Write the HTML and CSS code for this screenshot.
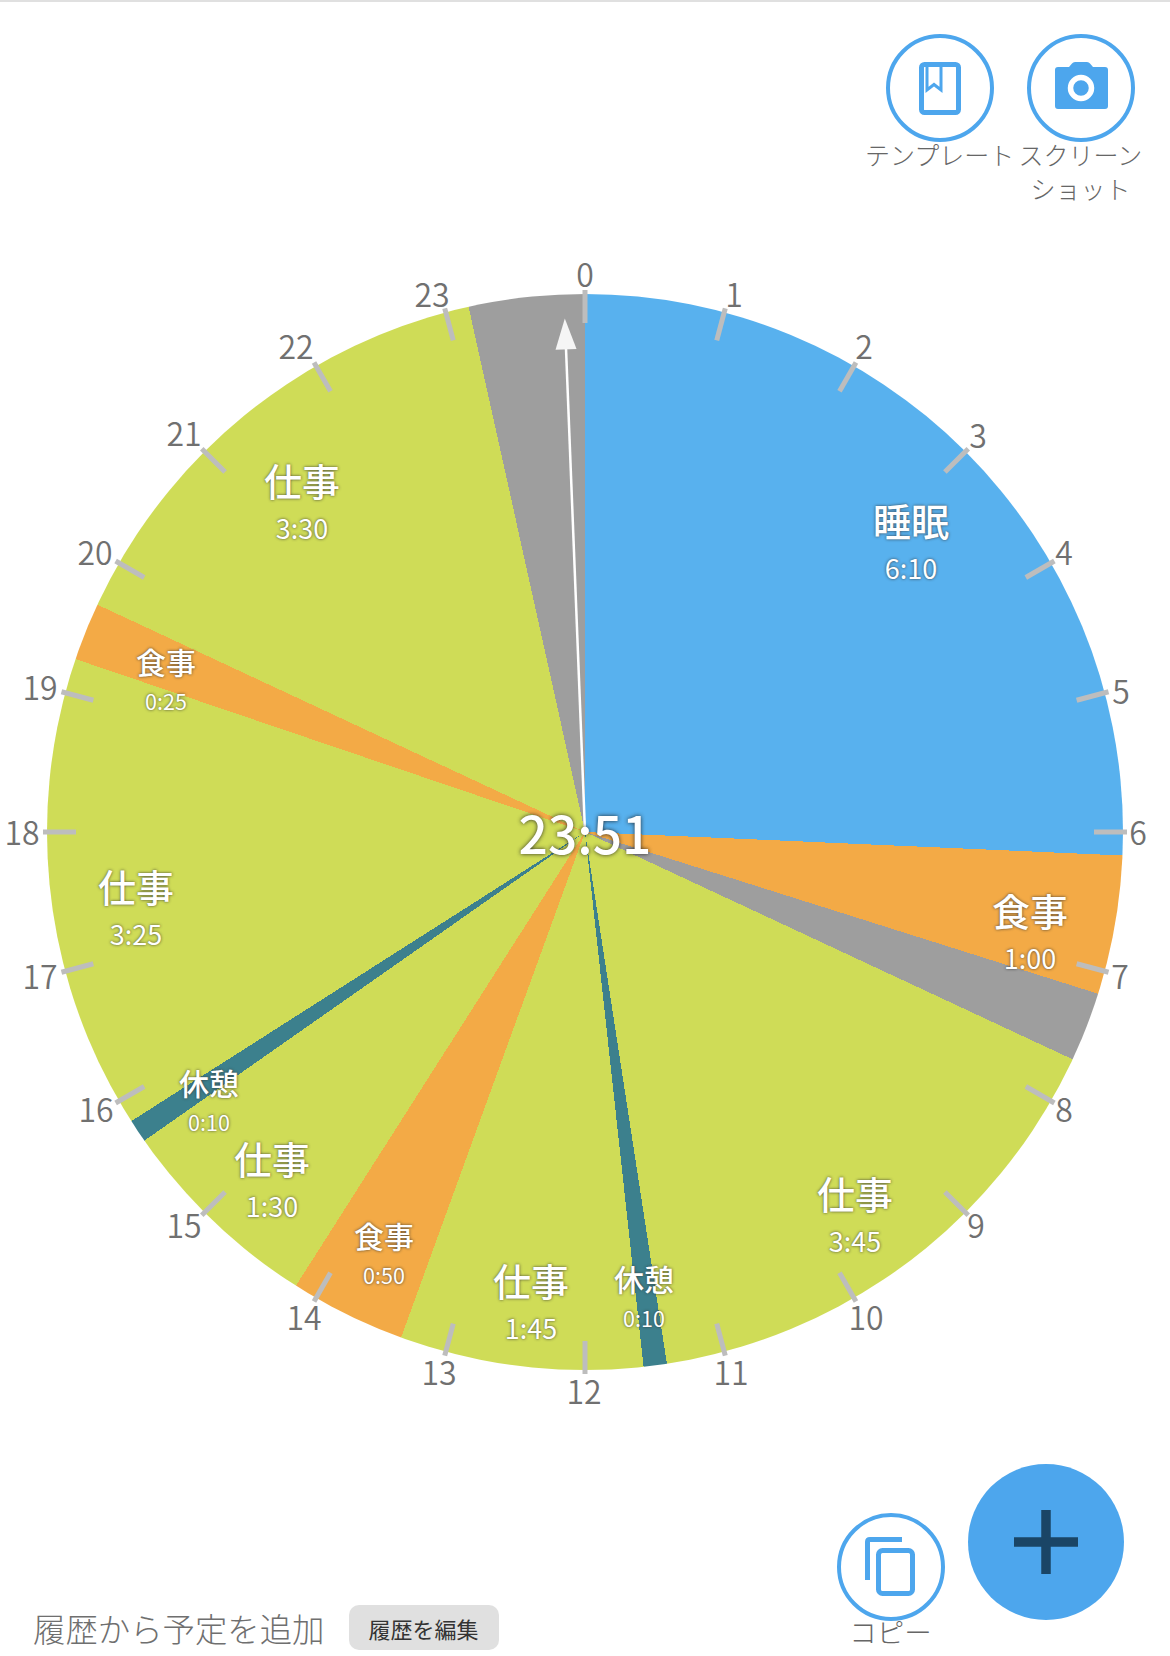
FILE: index.html
```html
<!DOCTYPE html>
<html lang="ja">
<head>
<meta charset="utf-8">
<title>円グラフ</title>
<link rel="stylesheet" href="styles.css">
</head>
<body>
<div class="app">
  <header class="tools">
    <div class="tool">
      <div class="ring">
        <svg class="icon" viewBox="0 0 108 108">
          <rect class="line-thick" x="35.500" y="30.500" width="37" height="48" rx="3"/>
          <path class="line-thin" d="M41 31V56L48 50.500L55 56V31"/>
        </svg>
      </div>
      <span class="tool-label">テンプレート</span>
    </div>
    <div class="tool">
      <div class="ring">
        <svg class="icon" viewBox="0 0 108 108">
          <path class="fill" d="M31 33H42L45 29.500Q46 28 48 28H60Q62 28 63 29.500L66 33H78Q81 33 81 36V72Q81 75 78 75H31Q28 75 28 72V36Q28 33 31 33Z"/>
          <circle class="lens" cx="54" cy="54" r="10.500"/>
        </svg>
      </div>
      <span class="tool-label">スクリーンショット</span>
    </div>
  </header>

  <main class="stage">
    <div class="pie">
      <svg class="overlay" viewBox="0 0 1076 1076">
        <g class="ticks">
          <line x1="538" y1="-4" x2="538" y2="29"/>
          <line x1="538" y1="-4" x2="538" y2="29" transform="rotate(15 538 538)"/>
          <line x1="538" y1="-4" x2="538" y2="29" transform="rotate(30 538 538)"/>
          <line x1="538" y1="-4" x2="538" y2="29" transform="rotate(45 538 538)"/>
          <line x1="538" y1="-4" x2="538" y2="29" transform="rotate(60 538 538)"/>
          <line x1="538" y1="-4" x2="538" y2="29" transform="rotate(75 538 538)"/>
          <line x1="538" y1="-4" x2="538" y2="29" transform="rotate(90 538 538)"/>
          <line x1="538" y1="-4" x2="538" y2="29" transform="rotate(105 538 538)"/>
          <line x1="538" y1="-4" x2="538" y2="29" transform="rotate(120 538 538)"/>
          <line x1="538" y1="-4" x2="538" y2="29" transform="rotate(135 538 538)"/>
          <line x1="538" y1="-4" x2="538" y2="29" transform="rotate(150 538 538)"/>
          <line x1="538" y1="-4" x2="538" y2="29" transform="rotate(165 538 538)"/>
          <line x1="538" y1="-4" x2="538" y2="29" transform="rotate(180 538 538)"/>
          <line x1="538" y1="-4" x2="538" y2="29" transform="rotate(195 538 538)"/>
          <line x1="538" y1="-4" x2="538" y2="29" transform="rotate(210 538 538)"/>
          <line x1="538" y1="-4" x2="538" y2="29" transform="rotate(225 538 538)"/>
          <line x1="538" y1="-4" x2="538" y2="29" transform="rotate(240 538 538)"/>
          <line x1="538" y1="-4" x2="538" y2="29" transform="rotate(255 538 538)"/>
          <line x1="538" y1="-4" x2="538" y2="29" transform="rotate(270 538 538)"/>
          <line x1="538" y1="-4" x2="538" y2="29" transform="rotate(285 538 538)"/>
          <line x1="538" y1="-4" x2="538" y2="29" transform="rotate(300 538 538)"/>
          <line x1="538" y1="-4" x2="538" y2="29" transform="rotate(315 538 538)"/>
          <line x1="538" y1="-4" x2="538" y2="29" transform="rotate(330 538 538)"/>
          <line x1="538" y1="-4" x2="538" y2="29" transform="rotate(345 538 538)"/>
        </g>
        <g class="hand" transform="rotate(-2.25 538 538)">
          <line x1="538" y1="538" x2="538" y2="50"/>
          <polygon points="538,24 548.500,55 527.500,55"/>
        </g>
      </svg>
    </div>

    <span class="hour" style="left:585px;top:65px">0</span>
    <span class="hour" style="left:734px;top:85px">1</span>
    <span class="hour" style="left:864px;top:137px">2</span>
    <span class="hour" style="left:978px;top:226px">3</span>
    <span class="hour" style="left:1064px;top:343px">4</span>
    <span class="hour" style="left:1121px;top:482px">5</span>
    <span class="hour" style="left:1138px;top:623px">6</span>
    <span class="hour" style="left:1120px;top:767px">7</span>
    <span class="hour" style="left:1064px;top:900px">8</span>
    <span class="hour" style="left:976px;top:1016px">9</span>
    <span class="hour" style="left:866px;top:1108px">10</span>
    <span class="hour" style="left:731px;top:1163px">11</span>
    <span class="hour" style="left:584px;top:1182px">12</span>
    <span class="hour" style="left:439px;top:1163px">13</span>
    <span class="hour" style="left:304px;top:1108px">14</span>
    <span class="hour" style="left:184px;top:1016px">15</span>
    <span class="hour" style="left:96px;top:900px">16</span>
    <span class="hour" style="left:40px;top:767px">17</span>
    <span class="hour" style="left:22px;top:623px">18</span>
    <span class="hour" style="left:40px;top:478px">19</span>
    <span class="hour" style="left:95px;top:343px">20</span>
    <span class="hour" style="left:184px;top:224px">21</span>
    <span class="hour" style="left:296px;top:137px">22</span>
    <span class="hour" style="left:432px;top:85px">23</span>

    <div class="slice" style="left:911px;top:335px"><b>睡眠</b><i>6:10</i></div>
    <div class="slice" style="left:1030px;top:725px"><b>食事</b><i>1:00</i></div>
    <div class="slice" style="left:855px;top:1008px"><b>仕事</b><i>3:45</i></div>
    <div class="slice small" style="left:644px;top:1090px"><b>休憩</b><i>0:10</i></div>
    <div class="slice" style="left:531px;top:1095px"><b>仕事</b><i>1:45</i></div>
    <div class="slice small" style="left:384px;top:1047px"><b>食事</b><i>0:50</i></div>
    <div class="slice" style="left:272px;top:973px"><b>仕事</b><i>1:30</i></div>
    <div class="slice small" style="left:209px;top:894px"><b>休憩</b><i>0:10</i></div>
    <div class="slice" style="left:136px;top:701px"><b>仕事</b><i>3:25</i></div>
    <div class="slice small" style="left:166px;top:473px"><b>食事</b><i>0:25</i></div>
    <div class="slice" style="left:302px;top:295px"><b>仕事</b><i>3:30</i></div>

    <div class="now">23:51</div>
  </main>

  <footer class="bottom">
    <div class="history">
      <span class="history-title">履歴から予定を追加</span>
      <button class="history-edit">履歴を編集</button>
    </div>
    <div class="tool copy">
      <div class="ring">
        <svg class="icon" viewBox="0 0 108 108">
          <rect class="line-thick" x="41.500" y="37.500" width="34" height="43" rx="4"/>
          <path class="line-thick" d="M30.500 67V29Q30.500 26.500 33 26.500H65"/>
        </svg>
      </div>
      <span class="tool-label copy-label">コピー</span>
    </div>
    <button class="fab" aria-label="追加">
      <svg class="fab-icon" viewBox="0 0 156 156">
        <path d="M46 78H110M78 46V110"/>
      </svg>
    </button>
  </footer>
</div>
</body>
</html>
```
FILE: styles.css
```css
* { box-sizing: border-box; }
html, body { margin: 0; padding: 0; background: #fff; }
body {
  font-family: "Noto Sans CJK JP", "Noto Sans", sans-serif;
  color: #666;
}
.app {
  width: 1170px;
  height: 1656px;
  overflow: hidden;
  display: flex;
  flex-direction: column;
}

/* top tools */
.tools {
  height: 210px;
  flex: none;
  border-top: 2px solid #e0e0e0;
  padding: 32px 19px 0 0;
  display: flex;
  justify-content: flex-end;
  align-items: flex-start;
}
.tool {
  width: 141px;
  display: flex;
  flex-direction: column;
  align-items: center;
}
.ring {
  width: 108px;
  height: 108px;
  flex: none;
  border: 4px solid #4da6ed;
  border-radius: 50%;
  position: relative;
}
.icon {
  position: absolute;
  left: -4px;
  top: -4px;
  width: 108px;
  height: 108px;
}
.line-thick { fill: none; stroke: #4da6ed; stroke-width: 5; }
.line-thin { fill: none; stroke: #4da6ed; stroke-width: 3; }
.fill { fill: #4da6ed; }
.lens { fill: #4da6ed; stroke: #fff; stroke-width: 5.500; }
.tool-label {
  margin-top: -5px;
  font-size: 25px;
  font-weight: 300;
  line-height: 34px;
  text-align: center;
  color: #666;
}
.tool:first-child .tool-label { white-space: nowrap; }
.tool-label.copy-label {
  margin-top: -7px;
  font-size: 27.500px;
}

/* chart */
.stage {
  position: relative;
  height: 1250px;
  flex: none;
  padding: 84px 47px 0;
}
.pie {
  width: 1076px;
  height: 1076px;
  border-radius: 50%;
  position: relative;
  background: conic-gradient(
    #58b1ee 0 92.5deg,
    #f3aa46 92.5deg 107.5deg,
    #9e9e9e 107.5deg 115deg,
    #cfdc57 115deg 171.25deg,
    #3c808d 171.25deg 173.75deg,
    #cfdc57 173.75deg 200deg,
    #f3aa46 200deg 212.5deg,
    #cfdc57 212.5deg 235deg,
    #3c808d 235deg 237.5deg,
    #cfdc57 237.5deg 288.75deg,
    #f3aa46 288.75deg 295deg,
    #cfdc57 295deg 347.5deg,
    #9e9e9e 347.5deg 360deg
  );
}
.overlay {
  position: absolute;
  inset: 0;
  width: 100%;
  height: 100%;
  overflow: visible;
}
.ticks line { stroke: #bdbdbd; stroke-width: 5; }
.hand line { stroke: #fff; stroke-width: 2.500; }
.hand polygon { fill: #f5f5f5; }

.hour {
  position: absolute;
  transform: translate(-50%, calc(-50% - 2px));
  font-size: 32px;
  font-weight: 350;
  line-height: 40px;
  color: #707070;
}
.slice {
  position: absolute;
  transform: translate(-50%, calc(-50% - 3px));
  display: flex;
  flex-direction: column;
  align-items: center;
  color: #fff;
  font-weight: 500;
  text-shadow: 0 0 3px rgba(50, 50, 50, 0.9);
  white-space: nowrap;
}
.slice b { font-weight: 500; font-size: 38px; line-height: 50px; }
.slice i { font-style: normal; font-weight: 400; font-size: 27px; line-height: 45px; }
.slice.small b { font-size: 30px; line-height: 41px; }
.slice.small i { font-size: 21.500px; line-height: 37px; }

.now {
  position: absolute;
  left: 585px;
  top: 622px;
  transform: translate(-50%, -50%);
  font-size: 51.500px;
  font-weight: 500;
  line-height: 60px;
  color: #fff;
  text-shadow: 0 0 4px rgba(30, 30, 30, 0.9);
}

/* bottom */
.bottom {
  flex: 1;
  display: flex;
  align-items: flex-start;
  padding: 0 46px 0 33px;
}
.history {
  margin-top: 145px;
  display: flex;
  align-items: center;
}
.history-title {
  font-size: 32.400px;
  font-weight: 300;
  line-height: 45px;
  color: #6f6f6f;
}
.history-edit {
  margin-left: 24px;
  width: 150px;
  height: 45px;
  padding: 0;
  border: 0;
  border-radius: 10px;
  background: #e0e0e0;
  font-family: inherit;
  font-size: 22px;
  color: #333;
}
.copy {
  margin-left: auto;
  margin-top: 53px;
}
.fab {
  margin: 4px 0 0 7px;
  width: 156px;
  height: 156px;
  padding: 0;
  border: 0;
  border-radius: 50%;
  background: #4da6ed;
  flex: none;
}
.fab-icon { display: block; width: 156px; height: 156px; }
.fab-icon path { fill: none; stroke: #1a4566; stroke-width: 9.500; }
```
